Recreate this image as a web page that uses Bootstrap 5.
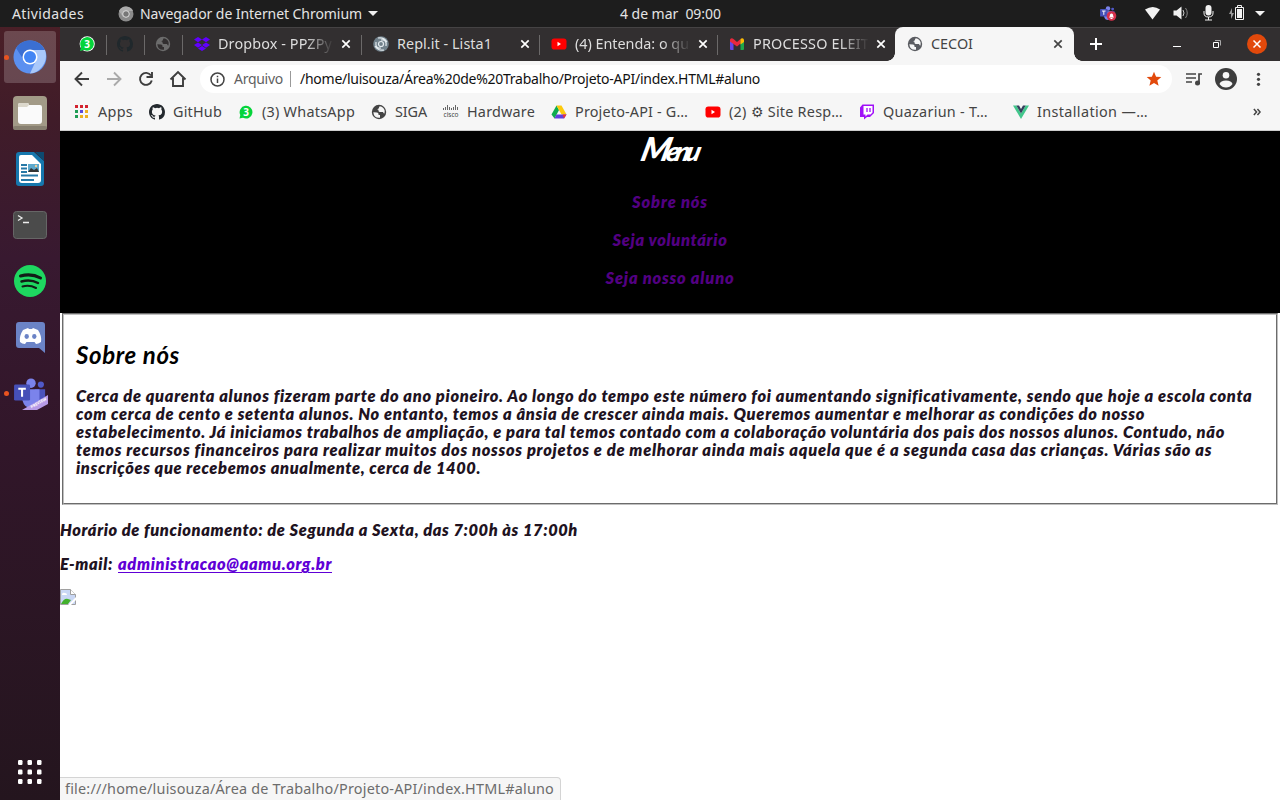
<!DOCTYPE html>
<html lang="pt-BR">
<head>
<meta charset="utf-8">
<title>CECOI</title>
<link rel="stylesheet" href="https://cdn.jsdelivr.net/npm/bootstrap@5.3.0/dist/css/bootstrap.min.css">
<style>
body{width:1280px;height:800px;overflow:hidden;font-family:"Noto Sans","Open Sans",sans-serif;font-size:14px;line-height:18px;background:#fff}
svg{display:block;flex:none}
.topbar{height:27px;background:#1d1d1d;color:#e4e4e4}
.fit{display:block;white-space:nowrap;flex:none}
.dock{width:60px;height:773px;background:linear-gradient(#4a1f27,#401c29 12%,#381930 30%,#311629 55%,#24151e)}
.dock-item{width:60px;height:56px;position:relative}
.dock-item.active::after{content:"";position:absolute;left:4px;top:4px;width:52px;height:52px;border-radius:3px;background:#ffffff30;z-index:0}
.dock-item svg{position:relative;z-index:1}
.running::before{content:"";position:absolute;left:4px;top:28px;width:5px;height:5px;border-radius:50%;background:#e95420;z-index:2}
.tabs{height:34px;background:#322f30;color:#dedede;padding-left:8px;border-top:1px solid #454344;font-size:14.4px}
.pinned{width:38px;height:33px;padding:0 0 1px 11px;position:relative}
.tab-item{height:33px;width:178px;padding:0 0 1px 12px;position:relative}
.pinned::after,.tab-item.sep::after{content:"";position:absolute;right:-1px;top:7px;width:1px;height:20px;background:#6b6969}
.tab-title{width:118px;margin-left:8px;overflow:hidden}
.tab-item .tab-title{margin-right:5px}
.fade-out{-webkit-mask-image:linear-gradient(90deg,#000 74%,transparent 98%);mask-image:linear-gradient(90deg,#000 74%,transparent 98%)}
.tab-current{width:179px;height:34px;margin-top:-1px;background:#f6f6f6;color:#444;border-radius:8px 8px 0 0;padding-left:12px;position:relative}
.tab-current::before,.tab-current::after{content:"";position:absolute;bottom:0;width:8px;height:8px}
.tab-current::before{left:-8px;background:radial-gradient(circle at 0 0,transparent 7.5px,#f6f6f6 8px)}
.tab-current::after{right:-8px;background:radial-gradient(circle at 100% 0,transparent 7.5px,#f6f6f6 8px)}
.toolbar{height:36px;background:#f6f6f6;padding-left:14px}
.omnibox{width:972px;height:28px;border-radius:14px;background:#fff;margin-left:12px;padding-left:10px;color:#5f5f5f}
.vline{width:1px;height:16px;background:#999;margin-left:7px}
.bookmarks{height:34px;background:#f6f6f6;color:#444;padding-left:14px;border-bottom:1px solid #ccc;padding-bottom:3px;font-size:14.4px}
.bm svg{margin-right:8px}
.view{width:1220px;height:669px;font-family:Lato,"Open Sans",sans-serif;font-weight:800;font-style:italic;font-size:16.4px;color:#21131f}
.menu-area{height:182px;background:#000;color:#530082}
.menu-title{height:38px;line-height:34px;font-weight:900;font-size:27px;color:#fff;transform:skewX(-14deg)}
.menu-title .fit::first-letter{font-size:33px}
.menu-link{height:18px;margin-bottom:20px}
.about{margin:0 2px;height:192px;border:2px groove #c0c0c0;padding:26px 12px 0}
.about h2{font-size:24px;line-height:28px;font-weight:700;color:#000;margin:0 0 18px}
.mail{color:#6000d6;text-decoration:underline;text-decoration-thickness:1px;text-underline-offset:2px}
.status{position:absolute;left:60px;bottom:0;width:501px;height:23px;background:#f6f6f6;border:1px solid #d4d4d4;border-left:0;border-bottom:0;border-radius:0 4px 0 0;color:#6c6c6c;padding-left:5px;font-size:14.4px}
</style>
</head>
<body>
<svg class="d-none">
<symbol id="wa" viewBox="0 0 16 16"><circle cx="8.200" cy="7.800" r="7.600" fill="#fff"/><path d="M1 15l1-4a6.800 6.800 0 1 1 3 3z" fill="#05d43a"/><text x="8.200" y="11.500" font-size="10" font-weight="700" text-anchor="middle" fill="#fff">3</text></symbol>
<symbol id="wa-plain" viewBox="0 0 16 16"><path d="M1.500 14.500l.8-3.500a6.400 6.400 0 1 1 2.700 2.800z" fill="#05d43a"/><text x="8.200" y="11.500" font-size="10" font-weight="700" text-anchor="middle" fill="#fff">3</text></symbol>
<symbol id="gh" viewBox="0 0 16 16"><path fill="currentColor" d="M8 0C3.580 0 0 3.580 0 8c0 3.540 2.290 6.530 5.470 7.590.4.070.55-.17.55-.38 0-.19-.01-.82-.01-1.490-2.010.37-2.530-.49-2.690-.94-.09-.23-.48-.94-.82-1.130-.28-.15-.68-.52-.01-.53.63-.01 1.080.58 1.230.82.72 1.210 1.870.87 2.330.66.07-.52.28-.87.51-1.070-1.780-.2-3.640-.89-3.640-3.950 0-.87.31-1.590.82-2.150-.08-.2-.36-1.020.08-2.120 0 0 .67-.21 2.200.82a7.400 7.400 0 0 1 4 0c1.530-1.040 2.200-.82 2.200-.82.44 1.100.16 1.920.08 2.120.51.56.82 1.270.82 2.150 0 3.070-1.870 3.750-3.650 3.950.29.25.54.73.54 1.480 0 1.070-.01 1.930-.01 2.200 0 .21.15.46.55.38A8.010 8.010 0 0 0 16 8c0-4.420-3.580-8-8-8z"/></symbol>
<symbol id="globe" viewBox="0 0 16 16"><circle cx="8" cy="8" r="7.200" fill="currentColor"/><path d="M2.300 8.300L6 8.500q1.500 0 1.500 1.500v1H9v2.800q-6 .6-6.700-5.500zM8.800 2.300q4 .8 4.900 4.500l-.2 2.700q-1 0-1.500-1.500H9q-1.500 0-1.500-1.500T5.800 5.200Q8 5.200 8 3.800q0-1 .8-1.500z" fill="var(--hole,#f6f6f6)"/></symbol>
<symbol id="yt" viewBox="0 0 16 16"><rect x=".5" y="2.500" width="15" height="11" rx="2.800" fill="#f00"/><path d="M6.500 5.800v4.400L10 8z" fill="#fff"/></symbol>
<symbol id="x" viewBox="0 0 10 10"><path d="M1.300 1.300l7.400 7.400M8.700 1.300L1.300 8.700" stroke="currentColor" stroke-width="1.700"/></symbol>
<symbol id="teams" viewBox="0 0 36 34"><circle cx="18" cy="5.500" r="5" fill="#7b83eb"/><circle cx="28.500" cy="7" r="3.300" fill="#5059c9"/><path d="M22 12h11v11q-2 5-8 5z" fill="#4b53bc"/><path d="M9 12h18v11q-1 9-9 9-7 0-9-8z" fill="#7b83eb"/><rect y="7" width="17" height="17" rx="1.500" fill="#4650b8"/><path d="M4.500 11.500h8M8.500 11.500v8.500" stroke="#fff" stroke-width="2.200"/></symbol>
</svg>

<header class="topbar d-flex align-items-center">
  <span class="fit" data-w="72" style="margin-left:12px">Atividades</span>
  <svg width="16" height="16" viewBox="0 0 16 16" style="margin-left:34px"><circle cx="8" cy="8" r="7.500" fill="#8b8b8b"/><path d="M1 5l4 6 3-6h7q-1-4-7-4.500Q3 .5 1 5" fill="#aaa"/><circle cx="8" cy="8" r="3.300" fill="#777" stroke="#ddd"/></svg>
  <span class="fit" data-w="222" style="margin-left:6px">Navegador de Internet Chromium</span>
  <svg width="10" height="5" style="margin-left:6px"><path d="M0 0h10L5 5z" fill="#eee"/></svg>
  <span class="fit" data-w="101" style="margin-left:242px">4 de mar&nbsp; 09:00</span>
  <svg width="180" height="27" viewBox="-10 0 180 27" class="ms-auto me-1" style="color:#f2f2f2">
    <use href="#teams" x="-6" y="6" width="16" height="15"/><circle cx="5.500" cy="16" r="4.800" fill="#d5304b"/><path d="M3 17.500q1-1 1-3 1.500-2 3 0 0 2 1 3zM4.500 18h2v1h-2z" fill="#fff"/>
    <path d="M39 9.500q8-5 15 0L46.500 19.500z" fill="currentColor"/>
    <path d="M67.500 10.500h3l5-4v13l-5-4h-3z" fill="currentColor"/><path d="M77 10q2 3 0 6" stroke="#ccc" fill="none"/><path d="M79.500 8q3.500 5 0 10" stroke="#888" fill="none"/>
    <rect x="99.500" y="5" width="6" height="10.500" rx="3" fill="currentColor"/><path d="M98 11v2q0 4 4.500 4t4.500-4v-2M102.500 17v3M99 20h7" stroke="currentColor" fill="none"/>
    <path d="M126 8l-3 6h2v5l3-6h-2z" fill="#999"/><path d="M129.500 7.500h8v12h-8zM131.500 5.500h4v2h-4z" fill="none" stroke="currentColor"/><path d="M131 9h5v9h-5z" fill="currentColor"/>
    <path d="M149 11h10l-5 5z" fill="currentColor"/>
  </svg>
</header>

<div class="d-flex">
<nav class="dock d-flex flex-column">
  <div class="dock-item active running d-flex align-items-center justify-content-center pt-1"><svg width="34" height="34" viewBox="0 0 34 34"><circle cx="17" cy="17" r="16.500" fill="#5b90f0"/><path d="M3 8a16.500 16.500 0 0 1 29 2.500H17a7 7 0 0 0-7 8.500z" fill="#3b6fd2"/><path d="M17 10h15q3 9-3 17-5 6-12 6.500l6-13z" fill="#a9c8fa"/><circle cx="17" cy="17" r="7.500" fill="#fff"/><circle cx="17" cy="17" r="6" fill="#4285f4"/></svg></div>
  <div class="dock-item d-flex align-items-center justify-content-center pt-1"><svg width="34" height="34" viewBox="0 0 34 34"><rect width="34" height="34" rx="4" fill="#a29a87"/><rect y="30" width="34" height="4" rx="2" fill="#877f70"/><path d="M5 9q0-2 2-2h7q2 0 2 2h11q2 0 2 2v14q0 3-3 3H8q-3 0-3-3z" fill="#fafafa"/><path d="M5 9q0-2 2-2h7q2 0 2 2l-2 2H5z" fill="#dcd8cc"/></svg></div>
  <div class="dock-item d-flex align-items-center justify-content-center pt-1"><svg width="28" height="34" viewBox="0 0 28 34"><path d="M3 0h15l10 9v22q0 3-3 3H3q-3 0-3-3V3q0-3 3-3z" fill="#1677ad"/><path d="M5 3h11l9 9v16q0 3-3 3H6q-3 0-3-3V5q0-2 2-2z" fill="#fff"/><path d="M19 0h9v9z" fill="#0d4a70"/><path d="M5 13h6M5 16.500h6M5 20h6M5 23.500h17M5 28h13" stroke="#2779a7" stroke-width="1.800"/><path d="M12 12h11v8H12z" fill="#5ca8cc"/><path d="M12 20l3-4 3 2 3-2 2 4z" fill="#333"/><circle cx="20" cy="14" r="1.200" fill="#ec9"/></svg></div>
  <div class="dock-item d-flex align-items-center justify-content-center pt-1"><svg width="34" height="28" viewBox="0 0 34 28"><rect x=".5" y=".5" width="33" height="27" rx="3" fill="#4b4b4b" stroke="#666"/><path d="M5 4.500l4 2.500-4 2.500M10 11.500h6" stroke="#eee" stroke-width="1.300" fill="none"/></svg></div>
  <div class="dock-item d-flex align-items-center justify-content-center pt-1"><svg width="32" height="32" viewBox="0 0 32 32"><circle cx="16" cy="16" r="16" fill="#1ed760"/><g fill="none" stroke="#121d17" stroke-linecap="round"><path d="M6.500 11q11-3 20 2" stroke-width="3"/><path d="M7.500 16.500q9-2.500 16.500 1.500" stroke-width="2.500"/><path d="M8.500 21.500q7-2 13.500 1.500" stroke-width="2"/></g></svg></div>
  <div class="dock-item d-flex align-items-center justify-content-center pt-1"><svg width="29" height="32" viewBox="0 0 29 32"><path d="M3 1h23q3 0 3 3v28l-6-5H3q-3 0-3-3V4q0-3 3-3z" fill="#6b83c6"/><path d="M7 9l5-2 1 1h3l1-1 5 2q4 6 3 12-3 2-5 2l-1.500-2h-8L9 23q-3 0-5-2-1-6 3-12z" fill="#fff"/><ellipse cx="10.700" cy="15.500" rx="2.200" ry="2.400" fill="#6b83c6"/><ellipse cx="18.300" cy="15.500" rx="2.200" ry="2.400" fill="#6b83c6"/></svg></div>
  <div class="dock-item running d-flex align-items-center justify-content-center pt-1"><svg width="36" height="34" viewBox="0 0 36 34" style="margin-left:4px;margin-top:4px"><use href="#teams" width="34" height="32"/><path d="M8 32L34 17v9l-11 6z" fill="#b79be6"/><text transform="translate(17.500 30.500) rotate(-30)" font-size="4" font-weight="700" fill="#fff">PREVIEW</text></svg></div>
  <div class="mt-auto d-flex justify-content-center" style="padding-bottom:16px"><svg width="24" height="24" viewBox="0 0 24 24" fill="#fff"><g id="dots"><rect width="4.500" height="5" rx="1.200"/><rect x="9.500" width="4.500" height="5" rx="1.200"/><rect x="19" width="4.500" height="5" rx="1.200"/></g><use href="#dots" y="9.500"/><use href="#dots" y="19"/></svg></div>
</nav>

<main>
  <div class="tabs d-flex align-items-center">
    <div class="pinned d-flex align-items-center"><svg width="16" height="16"><use href="#wa"/></svg></div>
    <div class="pinned d-flex align-items-center" style="color:#20282c"><svg width="16" height="16"><use href="#gh"/></svg></div>
    <div class="pinned d-flex align-items-center" style="color:#6c6c6c;--hole:#322f30"><svg width="16" height="16"><use href="#globe"/></svg></div>
    <div class="tab-item sep d-flex align-items-center" style="width:179px"><svg width="16" height="16" viewBox="0 0 16 16" fill="#6100ff"><path d="M4 1l4 2.600-4 2.600L0 3.600zM12 1l4 2.600-4 2.600-4-2.600zM4 6.500l4 2.600-4 2.600-4-2.600zM12 6.500l4 2.600-4 2.600-4-2.600zM4 12.500l4-2.600 4 2.600-4 2.500z"/></svg><div class="tab-title fade-out"><span class="fit" data-w="114">Dropbox - PPZPy</span></div><svg width="10" height="10" style="color:#fff"><use href="#x"/></svg></div>
    <div class="tab-item sep d-flex align-items-center"><svg width="16" height="16" viewBox="0 0 16 16"><circle cx="8" cy="8" r="7.800" fill="#71818b"/><g fill="none" stroke="#e3eaee" stroke-width="1.200"><circle cx="8" cy="8" r="2.500"/><path d="M8 4q6-1 5 6M8 12q-6 1-5-6M5 2q6-1 9 4M11 14q-6 1-9-4"/></g></svg><div class="tab-title"><span class="fit" data-w="95">Repl.it - Lista1</span></div><svg width="10" height="10" style="color:#fff"><use href="#x"/></svg></div>
    <div class="tab-item sep d-flex align-items-center"><svg width="16" height="16"><use href="#yt"/></svg><div class="tab-title fade-out"><span class="fit" data-w="114">(4) Entenda: o qu</span></div><svg width="10" height="10" style="color:#fff"><use href="#x"/></svg></div>
    <div class="tab-item d-flex align-items-center"><svg width="16" height="16" viewBox="0 0 16 16"><path d="M1 4h3.500v10H2q-1 0-1-1z" fill="#6444e8"/><path d="M11.500 4H15v9q0 1-1 1h-2.500z" fill="#1ea84b"/><path d="M1 3.500Q2.500 1.500 4.500 3L8 6l3.500-3v4.500L8 10.500 1 5.500z" fill="#e8283c"/><path d="M11.500 3q2-1.500 3.500.5V6l-3.500 2.500z" fill="#fbbc04"/></svg><div class="tab-title fade-out"><span class="fit" data-w="116">PROCESSO ELEIT</span></div><svg width="10" height="10" style="color:#fff"><use href="#x"/></svg></div>
    <div class="tab-current d-flex align-items-center"><svg width="16" height="16" style="color:#5a5c61"><use href="#globe"/></svg><div class="tab-title"><span class="fit" data-w="42">CECOI</span></div><svg width="10" height="10" style="color:#444;margin-left:4px"><use href="#x"/></svg></div>
    <svg width="200" height="33" viewBox="1074 28 200 33" fill="none" stroke="#fff"><path d="M1090 44h12M1096 38v12" stroke-width="2"/><path d="M1173 46.500h8"/><path d="M1213.500 42.500h5v5h-5z"/><path d="M1215 40.500h5.500v5" stroke="#aaa"/><circle cx="1257" cy="44" r="10" fill="#e2490b" stroke="none"/><path d="M1253.500 40.500l7 7M1260.500 40.500l-7 7" stroke-width="1.500"/></svg>
  </div>

  <div class="toolbar d-flex align-items-center">
    <svg width="114" height="36" viewBox="74 61 114 36" fill="none" stroke="#3d3d3d" stroke-width="1.900"><path d="M89 79H76M82 72.500L75.500 79l6.500 6.500"/><path d="M107 79h13M114 72.500l6.500 6.500-6.500 6.500" stroke="#aaa"/><path d="M151 75.500a6 6 0 1 0 .8 5M152 72v5h-5.500"/><path d="M170.500 79.500l7.500-7.500 7.500 7.500M173 78v8h10v-8"/></svg>
    <div class="omnibox d-flex align-items-center"><svg width="15" height="15" viewBox="0 0 15 15" fill="none" stroke="#444" stroke-width="1.500"><circle cx="7.500" cy="7.500" r="6.500"/><path d="M7.500 6.500V11M7.500 3.800v1.500"/></svg><span class="fit" data-w="49" style="margin-left:9px">Arquivo</span><span class="vline"></span><span class="fit" data-w="460" style="margin-left:9px;color:#111">/home/luisouza/Área%20de%20Trabalho/Projeto-API/index.HTML#aluno</span>
      <svg class="ms-auto" style="margin-right:10px" width="16" height="16" viewBox="0 0 16 16"><path d="M8 .8l2.100 4.900 5.200.4-4 3.500 1.300 5.200L8 12l-4.600 2.800 1.300-5.200-4-3.500 5.200-.4z" fill="#e2490b"/></svg></div>
    <svg width="96" height="36" viewBox="1172 61 96 36"><path d="M1186 74h10M1186 78h10M1186 82h6" stroke="#444" stroke-width="1.700"/><path d="M1199 84v-10h3" stroke="#444" stroke-width="1.700" fill="none"/><circle cx="1197.500" cy="83" r="2.500" fill="#444"/><circle cx="1226" cy="79" r="11" fill="#3d3d3d"/><circle cx="1226" cy="75.300" r="3.300" fill="#f6f6f6"/><path d="M1219.500 84q1-3.500 6.500-3.500t6.500 3.500q-2.500 3.500-6.500 3.500t-6.500-3.500" fill="#f6f6f6"/><g fill="#444"><circle cx="1258.500" cy="74.300" r="1.600"/><circle cx="1258.500" cy="79.300" r="1.600"/><circle cx="1258.500" cy="84.300" r="1.600"/></g></svg>
  </div>

  <div class="bookmarks d-flex align-items-center">
    <div class="bm d-flex align-items-center" style="width:75px"><svg width="16" height="16" viewBox="-1 -1 16 16"><path d="M0 0h3v3H0zM5 0h3v3H5zM10 0h3v3h-3z" fill="#d3232f"/><path d="M0 5h3v3H0zM0 10h3v3H0z" fill="#1f9d55"/><path d="M5 5h3v3H5z" fill="#5a48d8"/><path d="M10 5h3v3h-3zM5 10h3v3H5zM10 10h3v3h-3z" fill="#edb01e"/></svg><span class="fit" data-w="35">Apps</span></div>
    <div class="bm d-flex align-items-center" style="width:89px"><svg width="16" height="16" style="color:#24292e"><use href="#gh"/></svg><span class="fit" data-w="49">GitHub</span></div>
    <div class="bm d-flex align-items-center" style="width:133px"><svg width="16" height="16"><use href="#wa-plain"/></svg><span class="fit" data-w="93">(3) WhatsApp</span></div>
    <div class="bm d-flex align-items-center" style="width:72px"><svg width="16" height="16" style="color:#444"><use href="#globe"/></svg><span class="fit" data-w="32">SIGA</span></div>
    <div class="bm d-flex align-items-center" style="width:108px"><svg width="16" height="16" viewBox="0 0 16 16"><path d="M.5 4v2M2.500 3v3M4.500 1v5M6.500 3v3M8.500 4v2M10.500 3v3M12.500 1v5M14.500 3v3" stroke="#666"/><text x=".5" y="12.500" font-size="7" textLength="15" lengthAdjust="spacingAndGlyphs" fill="#444">cisco</text></svg><span class="fit" data-w="68">Hardware</span></div>
    <div class="bm d-flex align-items-center" style="width:154px"><svg width="16" height="16" viewBox="0 0 16 16"><path d="M5.500 1.500L8 6 3.500 14.500.5 10.500z" fill="#0eab4f"/><path d="M5.500 1.500h5l5 9h-5z" fill="#fdca0c"/><path d="M5.500 10.500h10l-2.500 4H3.300z" fill="#6040e0"/><path d="M11.500 10.500h4L13 14.500z" fill="#e33"/></svg><span class="fit" data-w="113">Projeto-API - G…</span></div>
    <div class="bm d-flex align-items-center" style="width:154px"><svg width="16" height="16"><use href="#yt"/></svg><span class="fit" data-w="114">(2) ⚙ Site Resp…</span></div>
    <div class="bm d-flex align-items-center" style="width:154px"><svg width="16" height="16" viewBox="0 0 16 16"><path d="M3.500.5H15V9l-4 4H8l-3 2.500V13H1V3.500z" fill="#a010f8"/><path d="M4.500 2h9v6.500l-2 2h-3l-2 2v-2h-2z" fill="#fff"/><path d="M8 4v4M11 4v4" stroke="#a010f8" stroke-width="1.300"/></svg><span class="fit" data-w="105">Quazariun - T…</span></div>
    <div class="bm d-flex align-items-center"><svg width="16" height="16" viewBox="0 0 16 16"><path d="M0 1.500h3.300L8 9.500l4.700-8H16L8 15z" fill="#41c68b"/><path d="M3.300 1.500H6L8 5l2-3.500h2.700L8 9.500z" fill="#34405c"/></svg><span class="fit" data-w="111">Installation —…</span></div>
    <svg class="ms-auto" style="margin-right:19px" width="8" height="8" viewBox="0 0 9 9" fill="none" stroke="#444" stroke-width="1.700"><path d="M1 1l3 3.500L1 8M5 1l3 3.500L5 8"/></svg>
  </div>

  <div class="view">
    <div class="menu-area d-flex flex-column align-items-center">
      <div class="menu-title"><span class="fit" data-w="64">Menu</span></div>
      <div class="menu-link mt-4"><span class="fit" data-w="76">Sobre nós</span></div>
      <div class="menu-link"><span class="fit" data-w="115">Seja voluntário</span></div>
      <div class="menu-link"><span class="fit" data-w="129">Seja nosso aluno</span></div>
    </div>
    <section class="about">
      <h2><span class="fit" data-w="104">Sobre nós</span></h2>
      <span class="fit" data-w="1176">Cerca de quarenta alunos fizeram parte do ano pioneiro. Ao longo do tempo este número foi aumentando significativamente, sendo que hoje a escola conta</span>
      <span class="fit" data-w="1069">com cerca de cento e setenta alunos. No entanto, temos a ânsia de crescer ainda mais. Queremos aumentar e melhorar as condições do nosso</span>
      <span class="fit" data-w="1149">estabelecimento. Já iniciamos trabalhos de ampliação, e para tal temos contado com a colaboração voluntária dos pais dos nossos alunos. Contudo, não</span>
      <span class="fit" data-w="1136">temos recursos financeiros para realizar muitos dos nossos projetos e de melhorar ainda mais aquela que é a segunda casa das crianças. Várias são as</span>
      <span class="fit" data-w="405">inscrições que recebemos anualmente, cerca de 1400.</span>
    </section>
    <p class="mt-3 mb-3"><span class="fit" data-w="518">Horário de funcionamento: de Segunda a Sexta, das 7:00h às 17:00h</span></p>
    <p class="d-flex mb-3"><span class="fit" data-w="53">E-mail:</span><a class="fit mail" style="margin-left:5px" data-w="214" href="#">administracao@aamu.org.br</a></p>
    <svg width="16" height="16" viewBox="0 0 16 16"><path d="M.5.5h10l5 5v10H.5z" fill="#c9d7f5" stroke="#a0a0a0"/><path d="M10.500.5v5h5" fill="#fff" stroke="#a0a0a0"/><path d="M2 5q1-2 3-1 2 0 2 2H2z" fill="#fff"/><path d="M1 15q3-6 7-5l3 1-3 4z" fill="#42b02c"/><path d="M8 16l8-8v3l-5 5z" fill="#fff"/></svg>
  </div>
</main>
</div>
<div class="status d-flex align-items-center"><span class="fit" data-w="489">file:///home/luisouza/Área de Trabalho/Projeto-API/index.HTML#aluno</span></div>

<script src="https://cdn.jsdelivr.net/npm/bootstrap@5.3.0/dist/js/bootstrap.bundle.min.js"></script>
<script>
// Spreads each label over its line length so the text keeps its measure.
document.querySelectorAll('.fit').forEach(function (el) {
  var r = document.createRange();
  r.selectNodeContents(el);
  var n = el.textContent.length;
  var w = r.getBoundingClientRect().width;
  el.style.letterSpacing = ((+el.dataset.w - w) / n) + 'px';
});
</script>
</body>
</html>
